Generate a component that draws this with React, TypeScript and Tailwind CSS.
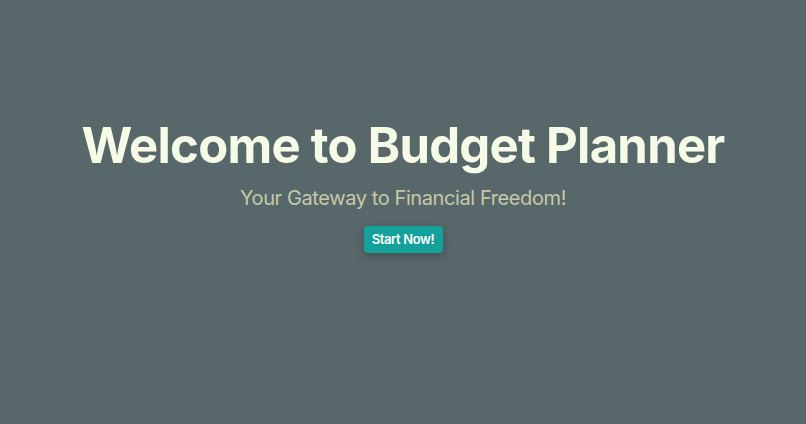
import React from "react";

export default function App() {
  return (
    <div className="min-h-screen w-full bg-[#58686a] flex flex-col items-center pt-[116px]" style={{ fontFamily: "Inter, 'Noto Sans', sans-serif" }}>
      <h1 className="text-[49px] leading-[60px] font-bold text-[#f5fbe7] tracking-[-0.015em]">Welcome to Budget Planner</h1>
      <p className="mt-[8px] text-[20px] leading-[28px] text-[#c6c9a8] tracking-[-0.02em]">Your Gateway to Financial Freedom!</p>
      <button className="mt-[14px] h-[27px] w-[79px] rounded-[4px] bg-[#15a19b] text-white text-[13px] font-semibold tracking-[-0.03em] shadow-[0_3px_8px_rgba(0,0,0,0.25)]">Start Now!</button>
    </div>
  );
}
